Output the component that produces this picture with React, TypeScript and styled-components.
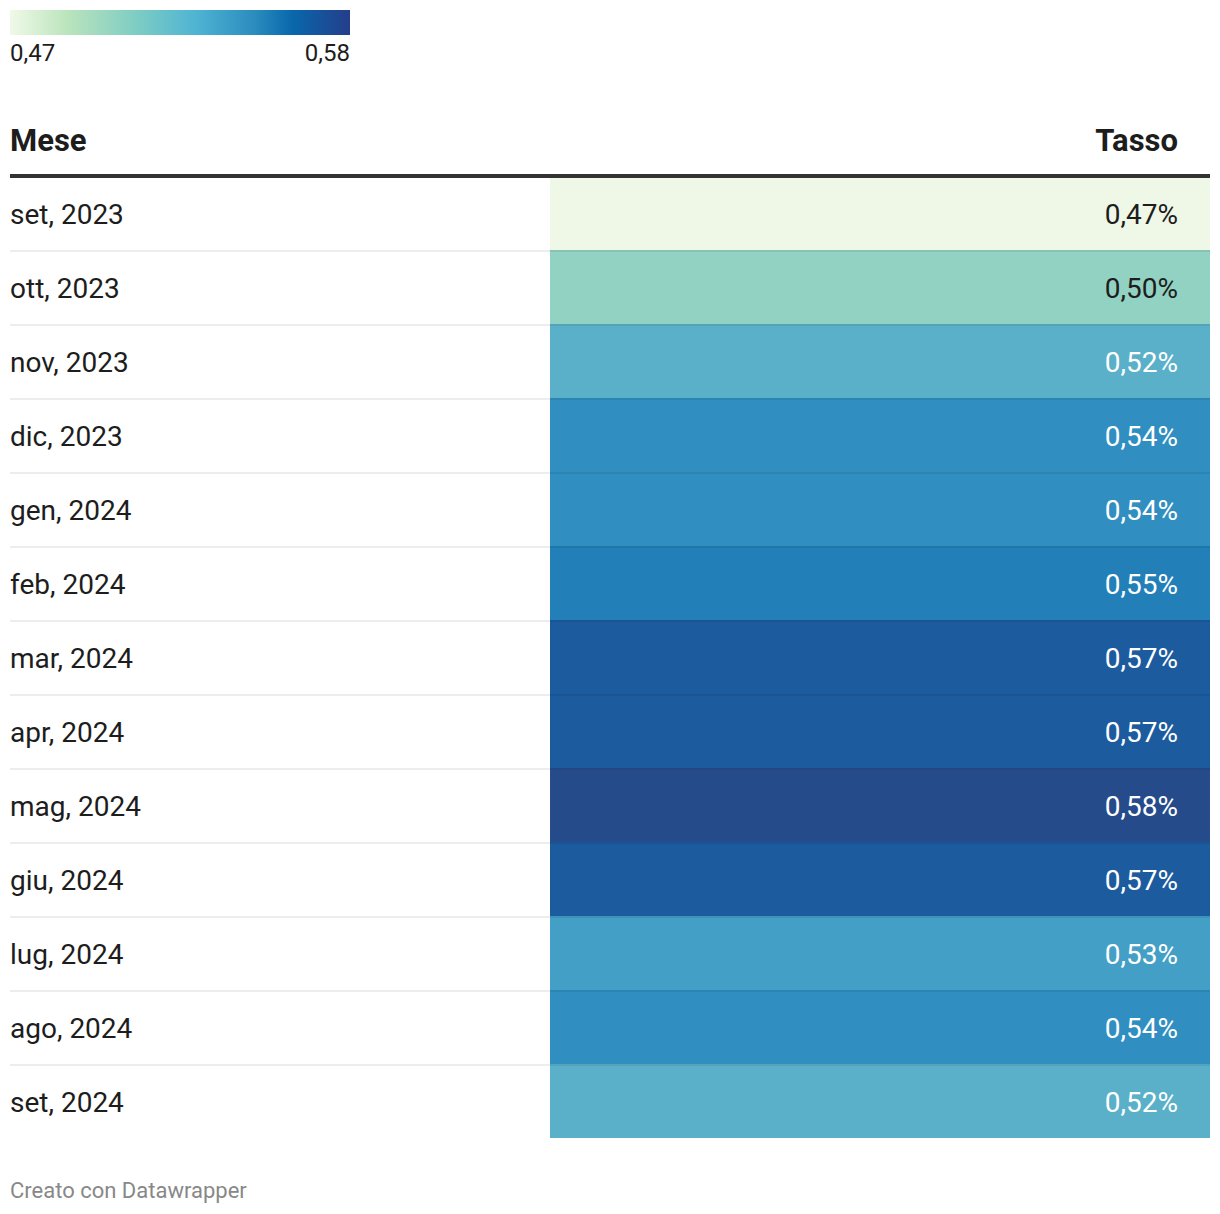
import React from "react";
import styled, { createGlobalStyle } from "styled-components";

const Global = createGlobalStyle`
  html, body { margin: 0; padding: 0; background: #fff; }
  body { font-family: Roboto, "Noto Sans", "Liberation Sans", sans-serif; color: #1d1d1d; }
`;

const Page = styled.div`
  width: 1200px;
  padding: 10px;
`;

const Legend = styled.div`
  width: 340px;
  display: flex;
  flex-direction: column;
  gap: 6px;
`;

const LegendBar = styled.div`
  height: 25px;
  background: linear-gradient(
    to right,
    #f0f9e8 0%,
    #bae4bc 17%,
    #7bccc4 38%,
    #4eb3d3 55%,
    #2b8cbe 72%,
    #0868ac 83%,
    #253d8a 100%
  );
`;

const LegendLabels = styled.div`
  display: flex;
  justify-content: space-between;
  font-size: 24px;
  line-height: 24px;
  color: #1d1d1d;
`;

const Table = styled.div`
  margin-top: 58px;
  display: flex;
  flex-direction: column;
`;

const HeaderRow = styled.div`
  display: grid;
  grid-template-columns: 540px 1fr;
  border-bottom: 4px solid #333;
`;

const HeaderCell = styled.div<{ $right?: boolean }>`
  font-size: 31px;
  line-height: 36px;
  font-weight: 700;
  color: #1d1d1d;
  padding: 0 ${(p) => (p.$right ? "32px" : "0")} 15px 0;
  text-align: ${(p) => (p.$right ? "right" : "left")};
`;

const Row = styled.div`
  display: grid;
  grid-template-columns: 540px 1fr;
`;

const Cell = styled.div<{ $first: boolean; $bg?: string; $light?: boolean; $right?: boolean }>`
  font-size: 28px;
  line-height: 28px;
  padding: 23px ${(p) => (p.$right ? "32px" : "0")} 21px 0;
  text-align: ${(p) => (p.$right ? "right" : "left")};
  border-top: ${(p) => (p.$first ? "none" : "2px solid rgba(0, 0, 0, 0.07)")};
  background: ${(p) => p.$bg || "transparent"};
  color: ${(p) => (p.$right && !p.$light ? "#ffffff" : "#1d1d1d")};
`;

const Footer = styled.div`
  margin-top: 40px;
  font-size: 22px;
  line-height: 26px;
  color: #888;
`;

type Item = { m: string; v: string; bg: string; light?: boolean };

const data: Item[] = [
  { m: "set, 2023", v: "0,47%", bg: "#eff8e7", light: true },
  { m: "ott, 2023", v: "0,50%", bg: "#92d2c2", light: true },
  { m: "nov, 2023", v: "0,52%", bg: "#5ab0c8" },
  { m: "dic, 2023", v: "0,54%", bg: "#308ec1" },
  { m: "gen, 2024", v: "0,54%", bg: "#308ec1" },
  { m: "feb, 2024", v: "0,55%", bg: "#227fb8" },
  { m: "mar, 2024", v: "0,57%", bg: "#1c5b9e" },
  { m: "apr, 2024", v: "0,57%", bg: "#1c5b9e" },
  { m: "mag, 2024", v: "0,58%", bg: "#264b8b" },
  { m: "giu, 2024", v: "0,57%", bg: "#1c5b9e" },
  { m: "lug, 2024", v: "0,53%", bg: "#439fc6" },
  { m: "ago, 2024", v: "0,54%", bg: "#308ec1" },
  { m: "set, 2024", v: "0,52%", bg: "#5ab0c8" },
];

export default function App() {
  return (
    <>
      <Global />
      <Page>
        <Legend>
          <LegendBar />
          <LegendLabels>
            <span>0,47</span>
            <span>0,58</span>
          </LegendLabels>
        </Legend>
        <Table>
          <HeaderRow>
            <HeaderCell>Mese</HeaderCell>
            <HeaderCell $right>Tasso</HeaderCell>
          </HeaderRow>
          {data.map((d, i) => (
            <Row key={i}>
              <Cell $first={i === 0}>{d.m}</Cell>
              <Cell $first={i === 0} $right $bg={d.bg} $light={d.light}>
                {d.v}
              </Cell>
            </Row>
          ))}
        </Table>
        <Footer>Creato con Datawrapper</Footer>
      </Page>
    </>
  );
}
